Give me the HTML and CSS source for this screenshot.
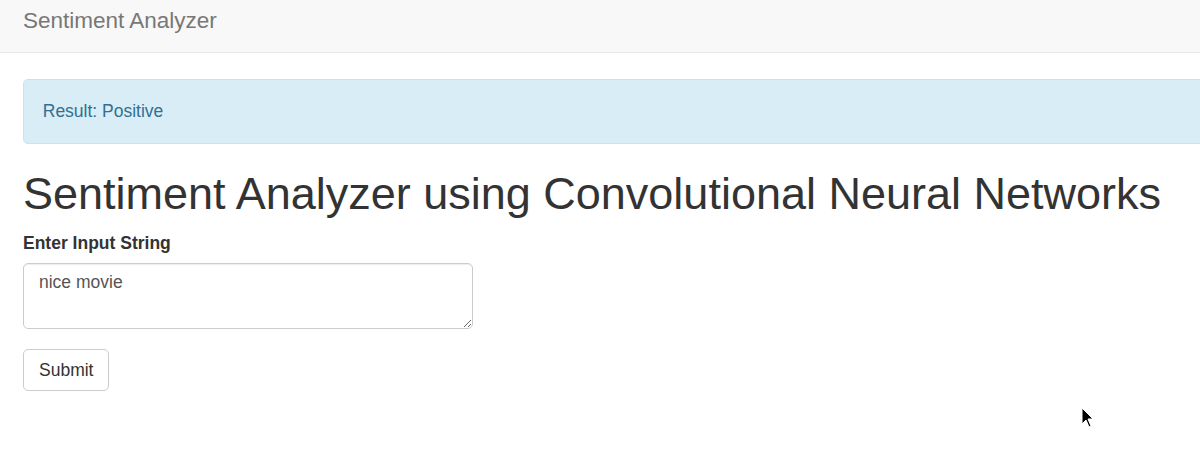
FILE: index.html
```html
<!DOCTYPE html>
<html lang="en">
<head>
<meta charset="utf-8">
<title>Sentiment Analyzer</title>
<link rel="stylesheet" href="styles.css">
</head>
<body>
<nav class="navbar">
  <a class="brand" href="#">Sentiment Analyzer</a>
</nav>
<main class="container">
  <div class="alert">Result: Positive</div>
  <h1 class="title">Sentiment Analyzer using Convolutional Neural Networks</h1>
  <form class="form">
    <label class="label" for="inp">Enter Input String</label>
    <textarea id="inp" class="input">nice movie</textarea>
    <button type="button" class="btn">Submit</button>
  </form>
</main>
<svg class="cursor" width="14" height="22" viewBox="0 0 14 22" aria-hidden="true">
  <path d="M1 1 L1 17 L5 13 L8 20 L10 19 L7 12 L12 12 Z" fill="#000" stroke="#fff" stroke-width="1"/>
</svg>
</body>
</html>
```
FILE: styles.css
```css
* { box-sizing: border-box; }
html, body { margin: 0; padding: 0; }
body {
  font-family: "Liberation Sans", Arial, sans-serif;
  font-size: 17.5px;
  line-height: 25px;
  color: #333;
  background: #fff;
  width: 1200px;
  height: 468px;
  overflow: hidden;
  position: relative;
}
.navbar {
  height: 53px;
  background: #f8f8f8;
  border-bottom: 1px solid #e7e7e7;
  display: flex;
  align-items: flex-start;
  padding: 8px 23px 0;
}
.brand {
  font-size: 22.5px;
  line-height: 25px;
  color: #777;
  text-decoration: none;
}
.container {
  width: 1260px;
  padding: 26.25px 0 0 23px;
}
.alert {
  background: #d9edf7;
  border: 1px solid #bce8f1;
  border-radius: 5px;
  color: #31708f;
  padding: 18.75px;
  line-height: 25px;
  margin-bottom: 25px;
}
.title {
  font-size: 45px;
  font-weight: 400;
  line-height: 1.1;
  margin: 25px 0 12.5px;
  color: #333;
}
.form { display: flex; flex-direction: column; align-items: flex-start; }
.label {
  font-weight: 700;
  margin-bottom: 7.5px;
}
.input {
  width: 450px;
  height: 65.5px;
  border: 1px solid #ccc;
  border-radius: 5px;
  padding: 6px 15px;
  font-family: inherit;
  font-size: 17.5px;
  line-height: 25px;
  color: #555;
  box-shadow: inset 0 1px 1px rgba(0,0,0,.075);
  margin: 0 0 20.6px;
}
.btn {
  font-family: inherit;
  font-size: 17.5px;
  color: #333;
  background: #fff;
  border: 1px solid #ccc;
  border-radius: 5px;
  padding: 7.5px 15px;
  line-height: 25px;
  cursor: pointer;
}
.cursor { position: absolute; left: 1081px; top: 407px; }
```
